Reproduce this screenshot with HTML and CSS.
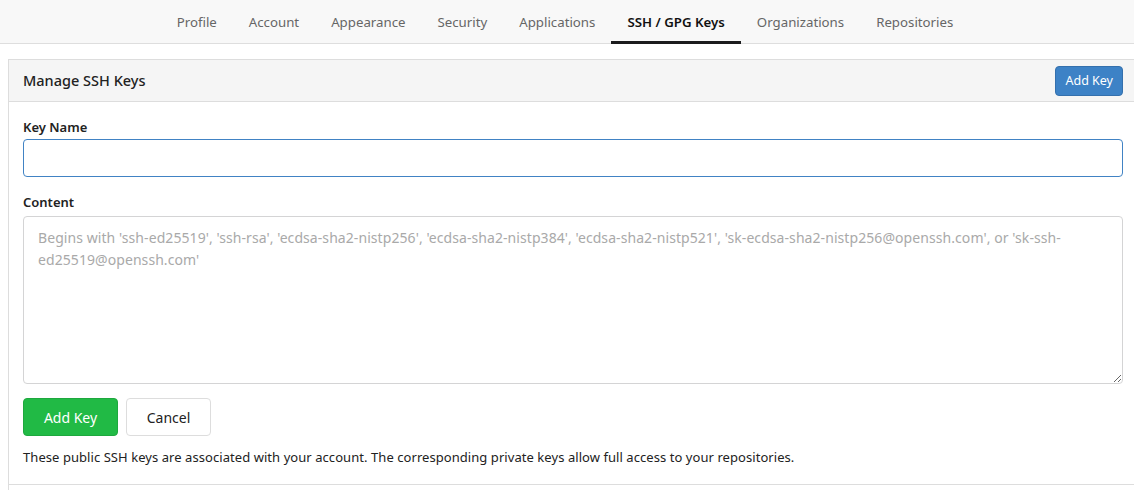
FILE: index.html
```html
<!DOCTYPE html>
<html>
<head>
<meta charset="utf-8">
<link rel="stylesheet" href="styles.css">
</head>
<body>
<nav class="tabs">
  <a class="tab">Profile</a>
  <a class="tab">Account</a>
  <a class="tab">Appearance</a>
  <a class="tab">Security</a>
  <a class="tab">Applications</a>
  <a class="tab active">SSH / GPG Keys</a>
  <a class="tab">Organizations</a>
  <a class="tab">Repositories</a>
</nav>
<section class="card">
  <header class="card-head">
    <h4 class="card-title">Manage SSH Keys</h4>
    <button class="btn btn-blue">Add Key</button>
  </header>
  <div class="card-body">
    <div class="field field-name">
      <label class="label">Key Name</label>
      <input class="input focused" type="text">
    </div>
    <div class="field">
      <label class="label">Content</label>
      <textarea class="textarea" placeholder="Begins with 'ssh-ed25519', 'ssh-rsa', 'ecdsa-sha2-nistp256', 'ecdsa-sha2-nistp384', 'ecdsa-sha2-nistp521', 'sk-ecdsa-sha2-nistp256@openssh.com', or 'sk-ssh-ed25519@openssh.com'"></textarea>
    </div>
    <div class="actions">
      <button class="btn btn-green">Add Key</button>
      <button class="btn btn-plain">Cancel</button>
    </div>
    <p class="note">These public SSH keys are associated with your account. The corresponding private keys allow full access to your repositories.</p>
  </div>
  <div class="card-foot"></div>
</section>
</body>
</html>
```

FILE: styles.css
```css
html, body {
  overflow: hidden;
}
body {
  margin: 0;
  font-family: "Segoe UI", "Noto Sans", "Open Sans", sans-serif;
  color: #222;
  background: #fff;
}
.tabs {
  display: flex;
  justify-content: center;
  height: 43px;
  background: #f8f8f8;
  border-bottom: 1px solid #dedede;
  padding-right: 4px;
}
.tab {
  display: flex;
  align-items: center;
  padding: 0 16px;
  font-size: 13.25px;
  color: #666;
  border-bottom: 3px solid transparent;
  margin-bottom: -1px;
  padding-top: 3px;
}
.tab.active {
  color: #111;
  font-weight: 600;
  border-bottom-color: #1b1c1d;
}
.card {
  margin: 15px 0 0 8px;
  width: 1128px;
  border: 1px solid #ddd;
  border-bottom: none;
}
.card-head {
  display: flex;
  align-items: center;
  justify-content: space-between;
  height: 41px;
  padding: 0 14px;
  background: #f5f5f5;
  border-bottom: 1px solid #ddd;
}
.card-title {
  margin: 0;
  font-size: 14.5px;
  font-weight: 500;
  color: #222;
  padding-bottom: 1px;
}
.btn {
  font-family: inherit;
  border-radius: 4px;
  cursor: pointer;
}
.btn-blue {
  height: 30px;
  padding: 0 9px;
  font-size: 12.5px;
  color: #fff;
  background: #3d82c6;
  border: 1px solid #3470ad;
}
.card-body {
  padding: 16px 14px 18px;
}
.field {
  display: flex;
  flex-direction: column;
  margin-bottom: 14px;
}
.field-name {
  margin-bottom: 16px;
}
.label {
  font-size: 13px;
  font-weight: 600;
  color: #222;
  margin-bottom: 3px;
}
.input {
  height: 38px;
  box-sizing: border-box;
  border: 1px solid #4183c4;
  border-radius: 4px;
  outline: none;
  font-family: inherit;
}
.textarea {
  box-sizing: border-box;
  height: 168px;
  margin-top: 2px;
  padding: 10px 14px;
  border: 1px solid #d4d4d5;
  border-radius: 4px;
  font-family: inherit;
  font-size: 14px;
  line-height: 22px;
  letter-spacing: 0.07px;
  resize: vertical;
}
.textarea::placeholder {
  color: #a9a9a9;
}
.actions {
  display: flex;
  gap: 8px;
}
.btn-green {
  height: 38px;
  width: 95px;
  font-size: 14px;
  color: #fff;
  background: #21ba45;
  border: 1px solid #1ea83e;
}
.btn-plain {
  height: 38px;
  width: 85px;
  font-size: 14px;
  color: #222;
  background: #fff;
  border: 1px solid #ddd;
}
.note {
  margin: 12px 0 0;
  font-size: 13px;
  letter-spacing: 0.06px;
  color: #222;
}
.card-foot {
  border-top: 1px solid #ddd;
  height: 20px;
}
```
